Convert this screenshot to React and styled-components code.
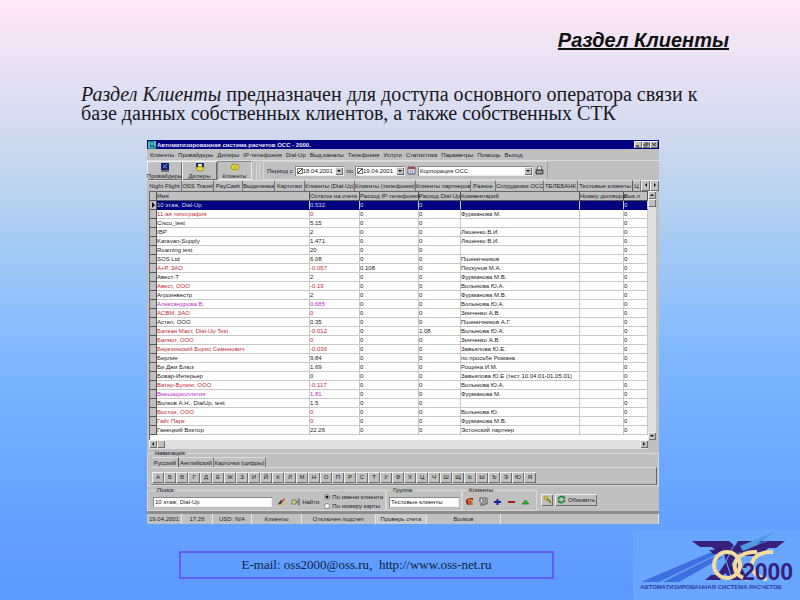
import { useState } from "react";
import styled, { createGlobalStyle, css } from "styled-components";

const GlobalStyle = createGlobalStyle`
  * {
    box-sizing: border-box;
  }

  body {
    margin: 0;
    background: #5a98ff;
  }
`;

const raised = css`
  box-shadow: inset 1px 1px #f0f0f0, inset -1px -1px #6c6c6c;
`;

const sunken = css`
  box-shadow: inset 1px 1px #8a8a8a, inset -1px -1px #ececec;
`;

const Slide = styled.div`
  display: flex;
  flex-direction: column;
  min-height: 100vh;
  background: linear-gradient(
    #ffe8f8 0%,
    #d0daee 23%,
    #b2d0f0 35%,
    #9bc5f7 46%,
    #80b8ff 59%,
    #6da9ff 76%,
    #5a98ff 100%
  );
`;

const Heading = styled.h1`
  margin: 28px 71px 0 0;
  text-align: right;
  font: italic bold 20px/24px "Liberation Sans", sans-serif;
  color: #111;
  text-decoration: underline;
  text-decoration-thickness: 2px;
`;

const Intro = styled.p`
  margin: 33px 80px 0 81px;
  font: 20px/19px "Liberation Serif", serif;
  color: #16181f;
`;

const AppWindow = styled.section`
  width: 64%;
  margin: 17px 0 0 147px;
  background: #c0c0c0;
  color: #1c1c1c;
  font: 6px/8px "Liberation Sans", sans-serif;
  white-space: nowrap;

  :where(button, input, select) {
    margin: 0;
    padding: 0;
    border: 0;
    border-radius: 0;
    font: inherit;
    color: inherit;
    background: #c0c0c0;
  }
`;

const TitleBar = styled.header`
  display: flex;
  align-items: center;
  gap: 1px;
  height: 9px;
  padding: 0 1px;
  background: #000080;
  color: #e8e8f8;
  font-weight: bold;
`;

const WindowButtons = styled.div`
  display: flex;
  margin-left: auto;
  color: #222;
`;

const WindowButton = styled.button`
  display: flex;
  align-items: center;
  justify-content: center;
  width: 8px;
  height: 7px;
  ${raised}
`;

const Menu = styled.nav`
  display: flex;
  align-items: center;
  gap: 4px;
  height: 11px;
  padding-left: 3px;

  a {
    color: inherit;
    text-decoration: none;
  }
`;

const Toolbar = styled.div`
  display: flex;
  height: 20px;
  border-top: 1px solid #dcdcdc;
`;

const ToolButton = styled.button`
  display: flex;
  flex-direction: column;
  align-items: center;
  justify-content: flex-end;
  width: 35px;
  height: 19px;
  ${(props) => (props.$active ? sunken : raised)}
`;

const Grip = styled.div`
  width: 4px;
  margin: 1px 3px 0 4px;
  border: solid #dadada;
  border-width: 0 1px;
`;

const FilterPanel = styled.div`
  display: flex;
  align-items: center;
  gap: 2px;
  width: 285px;
  padding: 0 3px;
  border: 1px solid #d6d6d6;
  border-right-color: #a0a0a0;
`;

const Combo = styled.span`
  display: grid;
  align-items: center;
  width: ${(props) => props.$width}px;
  height: 10px;
  background: #fff;
  ${sunken}

  select {
    grid-area: 1 / 1;
    width: 100%;
    padding-left: ${(props) => (props.$checked ? 8 : 2)}px;
    appearance: none;
    background: transparent;
  }

  input {
    grid-area: 1 / 1;
    z-index: 1;
    margin-left: 2px;
  }
`;

const ComboArrow = styled.span`
  grid-area: 1 / 1;
  justify-self: end;
  display: flex;
  align-items: center;
  justify-content: center;
  width: 8px;
  height: 8px;
  margin-right: 1px;
  background: #c0c0c0;
  pointer-events: none;
  ${raised}
`;

const Tick = styled.input`
  display: block;
  width: 6px;
  height: 6px;
  appearance: none;
  border: 1px solid #777;
  background: #fff;

  &:checked {
    background: linear-gradient(135deg, #fff 40%, #222 40%, #222 60%, #fff 60%);
  }
`;

const TabStrip = styled.div`
  display: flex;
  align-items: stretch;
  height: ${(props) => props.$height}px;
  padding-left: 1px;
`;

const Tab = styled.button`
  flex: none;
  width: ${(props) => props.$width}px;
  text-align: center;
  overflow: hidden;
  border-top: 1px solid #dedede;
  border-right: 1px solid ${(props) => (props.$active ? "#555" : "#777")};
`;

const TabScroll = styled.button`
  flex: none;
  width: 9px;
  ${raised}
`;

const GridFrame = styled.div`
  display: grid;
  grid-template-columns: 1fr 8px;
  grid-template-rows: 249px 9px;
  padding: 0 3px 0 2px;
`;

const GridBody = styled.div`
  background: #fff;
  border-top: 1px solid #666;
  border-left: 1px solid #666;
  overflow: hidden;
`;

const Table = styled.table`
  width: 100%;
  table-layout: fixed;
  border-collapse: separate;
  border-spacing: 0;

  th,
  td {
    height: 9px;
    padding: 0;
    line-height: 8px;
    text-align: left;
    font-weight: normal;
    border-right: 1px solid #c8c8c8;
    border-bottom: 1px solid #c8c8c8;
  }

  th {
    background: #c0c0c0;
    border-right-color: #555;
    border-bottom-color: #555;
  }

  td:first-child {
    background: #c0c0c0;
    border-right-color: #555;
    border-bottom-color: #555;
  }
`;

const ROW_COLORS = { red: "#c02c34", violet: "#c22ad0" };

const Row = styled.tr`
  td:nth-child(2),
  td:nth-child(3) {
    color: ${(props) => ROW_COLORS[props.$tone] || "inherit"};
  }

  ${(props) =>
    props.$selected &&
    css`
      td:not(:first-child) {
        color: #d8d8f0;
        background: #000080;
        border-bottom-color: #000080;
      }
    `}
`;

const ScrollTrack = styled.div`
  display: flex;
  flex-direction: ${(props) => (props.$vertical ? "column" : "row")};
  background: #e0e0e0;
`;

const ScrollButton = styled.button`
  display: flex;
  align-items: center;
  justify-content: center;
  width: 8px;
  height: 8px;
  ${(props) => props.$end && "margin-top: auto;"}
  ${(props) => props.$right && "margin-left: auto;"}
  ${raised}
`;

const Group = styled.fieldset`
  min-width: 0;
  margin: 0;
  padding: 0 2px;
  border: 1px solid #d8d8d8;
  width: ${(props) => (props.$width ? `${props.$width}px` : "auto")};

  legend {
    padding: 0 2px;
    margin-left: 2px;
  }
`;

const Navigation = styled(Group)`
  height: 37px;
  padding: 0 1px 0 3px;
`;

const Letters = styled.div`
  display: flex;
  height: 18px;
  padding-top: 4px;
  border: 1px solid #dcdcdc;
  border-left-color: #c0c0c0;
  border-right-color: #666;
  border-bottom-color: #777;
`;

const LetterButton = styled.button`
  width: 12px;
  height: 11px;
  line-height: 11px;
  ${raised}
`;

const SearchBar = styled.div`
  display: flex;
  align-items: stretch;
  height: 25px;
`;

const SearchGroup = styled(Group)`
  padding-left: 5px;
`;

const Inline = styled.div`
  display: flex;
  align-items: center;
  gap: ${(props) => props.$gap || 2}px;
  height: 15px;
`;

const TextField = styled.input`
  width: ${(props) => props.$width}px;
  height: 10px;
  padding: 0 2px;
  background: #fff;
  ${sunken}
`;

const IconButton = styled.button`
  display: flex;
  align-items: center;
  gap: 2px;
`;

const RaisedButton = styled(IconButton)`
  justify-content: center;
  width: ${(props) => props.$width}px;
  height: 12px;
  ${raised}
`;

const RadioList = styled.div`
  display: flex;
  flex-direction: column;

  label {
    display: flex;
    align-items: center;
    gap: 2px;
    height: 9px;
  }

  input {
    width: 6px;
    height: 6px;
    appearance: none;
    border: 1px solid #888;
    border-radius: 50%;
    background: #fff;
  }

  input:checked {
    background: radial-gradient(#111 1px, #fff 2px);
  }
`;

const Actions = styled.div`
  display: flex;
  align-items: center;
  gap: 2px;
  padding: 2px 0 0 4px;
`;

const StatusBar = styled.footer`
  display: flex;
  height: 13px;
  border-top: 3px solid #8c8c8c;
`;

const StatusCell = styled.span`
  width: ${(props) => props.$width}px;
  flex: ${(props) => (props.$width ? "none" : 1)};
  line-height: 10px;
  text-align: center;
  border-right: 1px solid #e8e8e8;
  ${(props) => props.$raised && "background: #cbcbcb;"}
`;

const SlideFooter = styled.footer`
  display: flex;
  align-items: flex-start;
  margin-top: auto;
  padding-left: 179px;
`;

const Contact = styled.address`
  flex: 0 1 375px;
  height: 28px;
  margin-top: 21px;
  border: 2px solid #625df2;
  text-align: center;
  font: 13px/24px "Liberation Serif", serif;
  color: #0d2240;
  white-space: pre;

  a {
    color: inherit;
    text-decoration: none;
  }
`;

const LogoBox = styled.div`
  width: 167px;
  height: 70px;
  margin-left: auto;
  background: #69a6ff;
`;

const MENU = [
  "Клиенты",
  "Провайдеры",
  "Дилеры",
  "IP-телефония",
  "Dial-Up",
  "Выд.каналы",
  "Телефония",
  "Услуги",
  "Статистика",
  "Параметры",
  "Помощь",
  "Выход",
];

const TABS = [
  ["Night Flight", 34],
  ["OSS Travel", 32],
  ["PayCash", 29],
  ["Выделенка", 32],
  ["Карточки", 30],
  ["Клиенты (Dial-Up)", 50],
  ["Клиенты (телефония)", 61],
  ["Клиенты партнеров", 55],
  ["Разное", 25],
  ["Сотрудники ОСС", 48],
  ["ТЕЛЕБАНК", 34],
  ["Тестовые клиенты", 55],
];

const COLUMNS = [
  ["", 7],
  ["Имя", 153],
  ["Остаток на счете", 50],
  ["Расход IP-телефония", 59],
  ["Расход Dial-Up", 42],
  ["Комментарий"],
  ["Номер договора", 44],
  ["Вык.л", 24],
];

// name, balance, ip, dial-up, comment, tone
const CLIENTS = [
  ["10 этаж, Dial-Up", "0.532", "0", "0", ""],
  ["11-ая типография", "0", "0", "0", "Фурманова М.", "red"],
  ["Cisco_test", "5.15", "0", "0", ""],
  ["IBP", "2", "0", "0", "Ляшенко В.И."],
  ["Karavan-Supply", "1.471", "0", "0", "Ляшенко В.И."],
  ["Roaming test", "20", "0", "0", ""],
  ["SOS Ltd", "6.08", "0", "0", "Пшеничников"],
  ["А+Р, ЗАО", "-0.057", "0.108", "0", "Пискунов М.А.", "red"],
  ["Авест-Т", "2", "0", "0", "Фурманова М.В."],
  ["Авест, ООО", "-0.19", "0", "0", "Волынова Ю.А.", "red"],
  ["Агроинвестр", "2", "0", "0", "Фурманова М.В."],
  ["Александрова В.", "0.685", "0", "0", "Волынова Ю.А.", "violet"],
  ["АСВМ, ЗАО", "0", "0", "0", "Зинченко А.В.", "red"],
  ["Астел, ООО", "0.35", "0", "0", "Пшеничников А.Г."],
  ["Балкан Маст, Dial-Up Test", "-0.012", "0", "1.08", "Волынова Ю.А.", "red"],
  ["Балнот, ООО", "0", "0", "0", "Зинченко А.В.", "red"],
  ["Березинский Борис Семенович", "-0.036", "0", "0", "Завьялова Ю.Е.", "red"],
  ["Берлин", "9.84", "0", "0", "по просьбе Романа"],
  ["Би Джи Блюз", "1.69", "0", "0", "Рощина И.М."],
  ["Бовар-Интерьер", "0", "0", "0", "Завьялова Ю.Е (тест 10.04.01-01.05.01)"],
  ["Ватер-Вулинг, ООО", "-0.117", "0", "0", "Волынова Ю.А.", "red"],
  ["Внешюрколлегия", "1.81", "0", "0", "Фурманова М.", "violet"],
  ["Волков А.Н., DialUp, test", "1.5", "0", "0", ""],
  ["Востон, ООО", "0", "0", "0", "Волынова Ю.", "red"],
  ["Гайт Парк", "0", "0", "0", "Фурманова М.В.", "red"],
  ["Ганецкий Виктор", "22.26", "0", "0", "Эстонский партнер"],
];

const LETTERS = "АБВГДЕЖЗИЙКЛМНОПРСТУФХЦЧШЩЬЫЪЭЮЯ".split("");

function Arrow({ dir }) {
  const paths = {
    down: "M1 2h4L3 4z",
    up: "M1 4h4L3 2z",
    left: "M4 1v4L2 3z",
    right: "M2 1v4l2-2z",
  };
  return (
    <svg width="6" height="6" viewBox="0 0 6 6">
      <path d={paths[dir]} fill="#111" />
    </svg>
  );
}

function RowMarker() {
  return (
    <svg width="6" height="8" viewBox="0 0 6 8" display="block">
      <path d="M2 1v6l3-3z" fill="#111" />
    </svg>
  );
}

function AppIcon() {
  return (
    <svg width="8" height="8" viewBox="0 0 8 8">
      <path d="M0 0h8v8H0z" fill="#1d8f9c" />
      <path d="M1 1v6M4 2v5M7 0v5" stroke="#9ff0d8" />
      <path d="M2 5h4" stroke="#0b2f60" />
    </svg>
  );
}

function ProviderIcon() {
  return (
    <svg width="10" height="9" viewBox="0 0 10 9">
      <path d="M1 0h8v7H1z" fill="#14246e" />
      <path d="M3 5l4-4M3 2l4 3" stroke="#6f8fe0" />
      <path d="M1 8h8" stroke="#222" />
    </svg>
  );
}

function DealerIcon() {
  return (
    <svg width="10" height="9" viewBox="0 0 10 9">
      <path d="M1 0h8v4H1z" fill="#1a2a7c" />
      <path d="M3 1h4v3H3z" fill="#f2e86a" />
      <path d="M1 4h8v1L7 8H3L1 5z" fill="#ead935" stroke="#55501c" strokeWidth=".5" />
    </svg>
  );
}

function ClientIcon() {
  return (
    <svg width="10" height="9" viewBox="0 0 10 9">
      <ellipse cx="5" cy="4" rx="4" ry="3" fill="#f0e234" stroke="#6e6820" strokeWidth=".6" />
      <path d="M3 3h1M6 3h1M4 5h2" stroke="#4d4810" strokeWidth=".7" />
      <path d="M3 7h4v1H3z" fill="#d8c92c" />
    </svg>
  );
}

function CalendarIcon() {
  return (
    <svg width="9" height="9" viewBox="0 0 9 9">
      <path d="M1 1h7v7H1z" fill="#f3eef5" stroke="#43436c" strokeWidth=".8" />
      <path d="M1 2h7" stroke="#b8423e" strokeWidth="2" />
      <path d="M2 5h5M2 7h5M3.500 3v5M5.500 3v5" stroke="#6a72a8" strokeWidth=".5" />
    </svg>
  );
}

function PrinterIcon() {
  return (
    <svg width="9" height="9" viewBox="0 0 9 9">
      <path d="M3 0h3l1 4H2z" fill="#eee" stroke="#333" strokeWidth=".7" />
      <path d="M1 4h7v4H1z" fill="#777" stroke="#222" strokeWidth=".7" />
      <path d="M2 6h5" stroke="#ddd" strokeWidth=".7" />
    </svg>
  );
}

function EraserIcon() {
  return (
    <svg width="9" height="8" viewBox="0 0 9 8">
      <path d="M1 6l3-4 2 1-3 4z" fill="#333" />
      <path d="M4 4l3-4 1 1-3 4z" fill="#c5482c" />
      <path d="M2 7l5-1 1-3" fill="none" stroke="#d8b93a" />
    </svg>
  );
}

function FindIcon() {
  return (
    <svg width="9" height="8" viewBox="0 0 9 8">
      <path d="M1 2h4v4H1z" fill="#e2df7a" stroke="#555" strokeWidth=".7" />
      <path d="M5 4h2M8 1v6M7 1h1M7 7h1" stroke="#333" strokeWidth=".8" />
    </svg>
  );
}

function PhoneIcon() {
  return (
    <svg width="9" height="9" viewBox="0 0 9 9">
      <path d="M1 3l3-2h4v2L6 4v1l2 1v2H3L1 6z" fill="#a3261c" />
      <path d="M3 3h4M3 5h2M4 7h4" stroke="#f1c12e" />
    </svg>
  );
}

function CardIcon() {
  return (
    <svg width="9" height="9" viewBox="0 0 9 9">
      <path d="M1 1h7v6H3L1 5z" fill="#ddd" stroke="#333" strokeWidth=".8" />
      <path d="M3 3h4M3 5h4" stroke="#333" strokeWidth=".9" />
      <path d="M1 8h4" stroke="#555" />
    </svg>
  );
}

function KeyIcon() {
  return (
    <svg width="9" height="9" viewBox="0 0 9 9">
      <circle cx="3" cy="3" r="1.700" fill="none" stroke="#b5a614" strokeWidth="1.400" />
      <path d="M4 4l4 4M6 6l1-1" stroke="#7d7210" strokeWidth="1.300" />
    </svg>
  );
}

function RefreshIcon() {
  return (
    <svg width="9" height="9" viewBox="0 0 10 10">
      <path d="M1.500 5a3.500 3.500 0 0 1 6-2.300" fill="none" stroke="#128a2c" strokeWidth="1.800" />
      <path d="M8.500 5a3.500 3.500 0 0 1-6 2.300" fill="none" stroke="#128a2c" strokeWidth="1.800" />
      <path d="M9 1v3H6zM1 9V6h3z" fill="#0d7a25" />
    </svg>
  );
}

function Logo() {
  return (
    <svg width="167" height="70" viewBox="0 0 167 70" role="img" aria-label="ОСС 2000">
      <path d="M8 52L76 23h10L26 52zM30 52l50-25h10L46 52z" fill="#3d6fe0" />
      <path
        d="M59 11h37l6 5 3-5h47l-9 7h-8l-3 4h-8l-3 4h-13l-4 6 6 8 5 10H99l-7-7-5 7H72l6-5h6l9-13-2-8H80l-4-4h6l-3-3H67l-4-3z"
        fill="#36217c"
      />
      <path d="M107 16l37-15-20 13 20-7-34 14z" fill="#4e9be0" />
      <path d="M101 15l-8 16 6 18M107 22l-8 12 8 14" fill="none" stroke="#69a6ff" />
      <g fill="none" stroke="#f3dc9c" strokeWidth="4">
        <ellipse cx="94" cy="35" rx="13" ry="13" />
        <path d="M124 22c-28-1-28 25-9 27M140 22c-27-1-27 24-6 27" />
      </g>
      <text
        x="109"
        y="50"
        fill="#36217c"
        fontFamily="Liberation Sans, sans-serif"
        fontWeight="bold"
        fontSize="23"
      >
        2000
      </text>
      <text
        x="7"
        y="59"
        fill="#2d3b9e"
        fontFamily="Liberation Sans, sans-serif"
        fontWeight="bold"
        fontSize="6"
      >
        АВТОМАТИЗИРОВАННАЯ СИСТЕМА РАСЧЕТОВ
      </text>
    </svg>
  );
}

function DateCombo({ label, value }) {
  return (
    <Combo $width={50} $checked>
      <Tick type="checkbox" defaultChecked aria-label={label} />
      <select aria-label={label}>
        <option>{value}</option>
      </select>
      <ComboArrow>
        <Arrow dir="down" />
      </ComboArrow>
    </Combo>
  );
}

function ClientRow({ client, selected, onSelect }) {
  const [name, balance, ip, dialUp, comment, tone] = client;
  return (
    <Row $tone={tone} $selected={selected} onClick={onSelect}>
      <td>{selected && <RowMarker />}</td>
      <td>{name}</td>
      <td>{balance}</td>
      <td>{ip}</td>
      <td>{dialUp}</td>
      <td>{comment}</td>
      <td />
      <td>0</td>
    </Row>
  );
}

function ClientGrid() {
  const [selected, setSelected] = useState(0);

  return (
    <GridFrame>
      <GridBody>
        <Table>
          <colgroup>
            {COLUMNS.map(([title, width]) => (
              <col key={title} style={{ width }} />
            ))}
          </colgroup>
          <thead>
            <tr>
              {COLUMNS.map(([title]) => (
                <th key={title}>{title}</th>
              ))}
            </tr>
          </thead>
          <tbody>
            {CLIENTS.map((client, index) => (
              <ClientRow
                key={client[0]}
                client={client}
                selected={index === selected}
                onSelect={() => setSelected(index)}
              />
            ))}
          </tbody>
        </Table>
      </GridBody>
      <ScrollTrack $vertical>
        <ScrollButton aria-label="Вверх">
          <Arrow dir="up" />
        </ScrollButton>
        <ScrollButton aria-label="Ползунок" />
        <ScrollButton $end aria-label="Вниз">
          <Arrow dir="down" />
        </ScrollButton>
      </ScrollTrack>
      <ScrollTrack>
        <ScrollButton aria-label="Влево">
          <Arrow dir="left" />
        </ScrollButton>
        <ScrollButton aria-label="Ползунок" />
        <ScrollButton $right aria-label="Вправо">
          <Arrow dir="right" />
        </ScrollButton>
      </ScrollTrack>
    </GridFrame>
  );
}

function SearchPanel() {
  return (
    <SearchBar>
      <SearchGroup $width={239}>
        <legend>Поиск</legend>
        <Inline $gap={5}>
          <TextField $width={121} aria-label="Поиск" defaultValue="10 этаж, Dial-Up" />
          <IconButton aria-label="Очистить">
            <EraserIcon />
          </IconButton>
          <IconButton>
            <FindIcon />
            Найти
          </IconButton>
          <RadioList>
            <label>
              <input type="radio" name="by" defaultChecked />
              По имени клиента
            </label>
            <label>
              <input type="radio" name="by" />
              По номеру карты
            </label>
          </RadioList>
        </Inline>
      </SearchGroup>
      <Group $width={76}>
        <legend>Группа</legend>
        <Inline>
          <TextField $width={70} aria-label="Группа" defaultValue="Тестовые клиенты" />
        </Inline>
      </Group>
      <Group $width={75}>
        <legend>Клиенты</legend>
        <Inline $gap={5}>
          <IconButton aria-label="Телефон">
            <PhoneIcon />
          </IconButton>
          <IconButton aria-label="Карточка">
            <CardIcon />
          </IconButton>
          <IconButton aria-label="Добавить">
            <svg width="9" height="8" viewBox="0 0 9 8">
              <path d="M4.500 1v6M1 4h7" stroke="#1620a8" strokeWidth="2" />
            </svg>
          </IconButton>
          <IconButton aria-label="Удалить">
            <svg width="9" height="8" viewBox="0 0 9 8">
              <path d="M1 4h7" stroke="#a81c20" strokeWidth="2" />
            </svg>
          </IconButton>
          <IconButton aria-label="Изменить">
            <svg width="9" height="8" viewBox="0 0 9 8">
              <path d="M1 6l3.500-4L8 6z" fill="#28b828" stroke="#176017" strokeWidth=".6" />
            </svg>
          </IconButton>
        </Inline>
      </Group>
      <Actions>
        <RaisedButton $width={12} aria-label="Ключ">
          <KeyIcon />
        </RaisedButton>
        <RaisedButton $width={42}>
          <RefreshIcon />
          Обновить
        </RaisedButton>
      </Actions>
    </SearchBar>
  );
}

function BillingWindow() {
  return (
    <AppWindow>
      <TitleBar>
        <AppIcon />
        Автоматизированная система расчетов ОСС - 2000.
        <WindowButtons>
          <WindowButton aria-label="Свернуть">
            <svg width="6" height="5" viewBox="0 0 6 5">
              <path d="M1 4h3" stroke="#111" />
            </svg>
          </WindowButton>
          <WindowButton aria-label="Восстановить">
            <svg width="6" height="5" viewBox="0 0 6 5">
              <path d="M2 1h3v2M1 2h3v2H1z" fill="none" stroke="#111" strokeWidth=".7" />
            </svg>
          </WindowButton>
          <WindowButton aria-label="Закрыть">
            <svg width="6" height="5" viewBox="0 0 6 5">
              <path d="M1 1l4 3M5 1L1 4" stroke="#111" strokeWidth=".8" />
            </svg>
          </WindowButton>
        </WindowButtons>
      </TitleBar>
      <Menu>
        {MENU.map((item) => (
          <a key={item} href="#menu">
            {item}
          </a>
        ))}
      </Menu>
      <Toolbar>
        <ToolButton>
          <ProviderIcon />
          Провайдеры
        </ToolButton>
        <ToolButton>
          <DealerIcon />
          Дилеры
        </ToolButton>
        <ToolButton $active>
          <ClientIcon />
          Клиенты
        </ToolButton>
        <Grip />
        <FilterPanel>
          Период с
          <DateCombo label="Период с" value="18.04.2001" />
          по
          <DateCombo label="Период по" value="19.04.2001" />
          <IconButton aria-label="Календарь">
            <CalendarIcon />
          </IconButton>
          <Combo $width={116}>
            <select aria-label="Организация">
              <option>Корпорация ОСС</option>
            </select>
            <ComboArrow>
              <Arrow dir="down" />
            </ComboArrow>
          </Combo>
          <IconButton aria-label="Печать">
            <PrinterIcon />
          </IconButton>
        </FilterPanel>
      </Toolbar>
      <TabStrip $height={11}>
        {TABS.map(([title, width]) => (
          <Tab key={title} $width={width} $active={title === "Тестовые клиенты"}>
            {title}
          </Tab>
        ))}
        <Tab $width={8}>Ц</Tab>
        <TabScroll aria-label="Назад">
          <Arrow dir="left" />
        </TabScroll>
        <TabScroll aria-label="Вперед">
          <Arrow dir="right" />
        </TabScroll>
      </TabStrip>
      <ClientGrid />
      <Navigation>
        <legend>Навигация</legend>
        <TabStrip $height={10}>
          <Tab $width={27} $active>
            Русский
          </Tab>
          <Tab $width={35}>Английский</Tab>
          <Tab $width={52}>Карточки (цифры)</Tab>
        </TabStrip>
        <Letters>
          {LETTERS.map((letter) => (
            <LetterButton key={letter}>{letter}</LetterButton>
          ))}
        </Letters>
      </Navigation>
      <SearchPanel />
      <StatusBar>
        <StatusCell $width={35}>19.04.2001</StatusCell>
        <StatusCell $width={31}>17:26</StatusCell>
        <StatusCell $width={39}>USD: N/A</StatusCell>
        <StatusCell $width={50}>Клиенты</StatusCell>
        <StatusCell $width={74}>Отключен подсчет</StatusCell>
        <StatusCell $width={51} $raised>
          Проверь счета
        </StatusCell>
        <StatusCell $width={74}>Волков</StatusCell>
        <StatusCell />
      </StatusBar>
    </AppWindow>
  );
}

export default function App() {
  return (
    <Slide>
      <GlobalStyle />
      <Heading>Раздел Клиенты</Heading>
      <Intro>
        <em>Раздел Клиенты</em> предназначен для доступа основного оператора связи к базе данных
        собственных клиентов, а также собственных СТК
      </Intro>
      <BillingWindow />
      <SlideFooter>
        <Contact>
          E-mail: <a href="mailto:oss2000@oss.ru">oss2000@oss.ru</a>,{"  "}
          <a href="http://www.oss-net.ru">http://www.oss-net.ru</a>
        </Contact>
        <LogoBox>
          <Logo />
        </LogoBox>
      </SlideFooter>
    </Slide>
  );
}
